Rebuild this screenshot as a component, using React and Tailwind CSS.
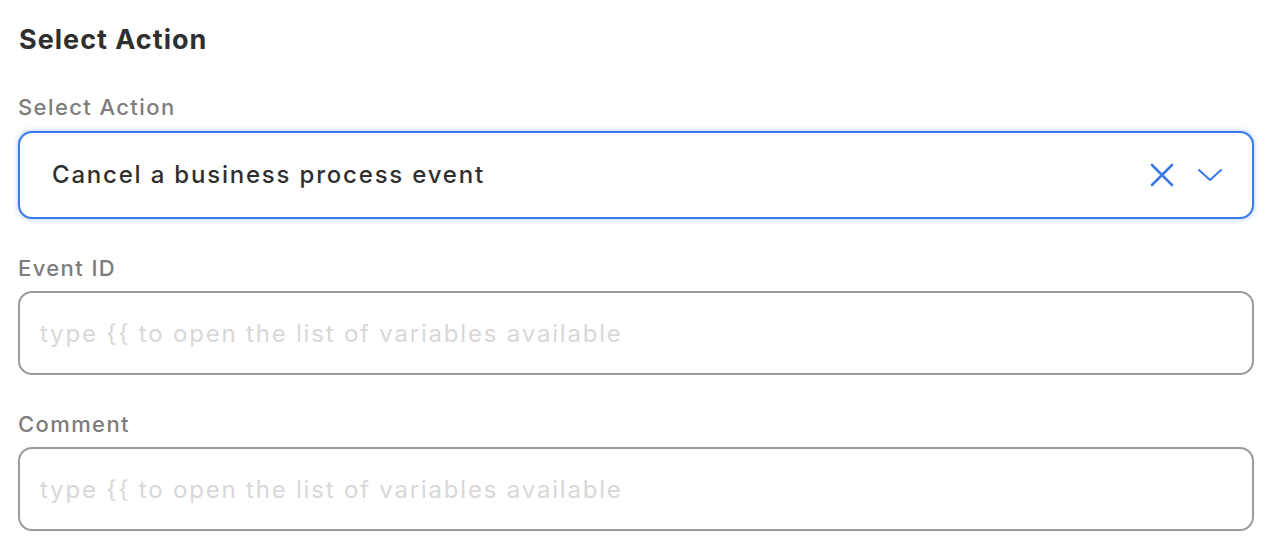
import { useState } from "react"

const font = { fontFamily: "Inter, 'Noto Sans', sans-serif" }

function Field({ label, placeholder }) {
  const [value, setValue] = useState("")

  return (
    <div className="flex flex-col">
      <label className="text-[22px] leading-[28px] tracking-[1.4px] text-[#7d7d7d] font-medium mb-[9px]">
        {label}
      </label>
      <input
        value={value}
        onChange={(e) => setValue(e.target.value)}
        placeholder={placeholder}
        className="h-[84px] w-full rounded-[14px] border-2 border-[#9b9b9b] bg-white px-[20px] text-[24px] tracking-[1.8px] text-[#333] outline-none placeholder:text-[#d8d8d8]"
      />
    </div>
  )
}

export default function App() {
  return (
    <div style={font} className="min-h-screen bg-white pl-[18px] pr-[22px] pt-[22px]">
      <h2 className="text-[27px] leading-[36px] tracking-[1px] font-bold text-[#2f2f2f] pl-[1px]">
        Select Action
      </h2>

      <div className="mt-[35px] flex flex-col">
        <label className="text-[22px] leading-[28px] tracking-[1.4px] text-[#7d7d7d] font-medium mb-[10px]">
          Select Action
        </label>
        <div className="flex h-[88px] items-center rounded-[14px] border-2 border-[#3a7be6] bg-white pl-[32px] pr-[30px] shadow-[0_0_5px_rgba(58,123,230,0.45)]">
          <span className="flex-1 text-[24px] tracking-[1.8px] font-medium text-[#303030]">
            Cancel a business process event
          </span>
          <button className="mr-[24px] text-[#3a7be6]">
            <svg width="24" height="24" viewBox="0 0 24 24" fill="none" stroke="currentColor" strokeWidth="2.6" strokeLinecap="round">
              <path d="M2 2 L22 22 M22 2 L2 22" />
            </svg>
          </button>
          <button className="text-[#3a7be6]">
            <svg width="24" height="14" viewBox="0 0 24 14" fill="none" stroke="currentColor" strokeWidth="2" strokeLinecap="round" strokeLinejoin="round">
              <path d="M1 2 L12 12 L23 2" />
            </svg>
          </button>
        </div>
      </div>

      <div className="mt-[35px] flex flex-col gap-[35px]">
        <Field label="Event ID" placeholder="type {{ to open the list of variables available" />
        <Field label="Comment" placeholder="type {{ to open the list of variables available" />
      </div>
    </div>
  )
}
